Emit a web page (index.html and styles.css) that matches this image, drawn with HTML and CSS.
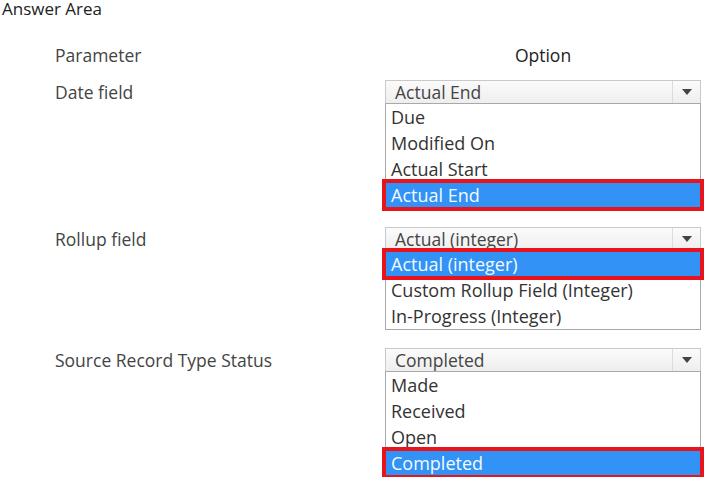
FILE: index.html
```html
<!DOCTYPE html>
<html>
<head>
<meta charset="utf-8">
<link rel="stylesheet" href="styles.css">
</head>
<body>
<div class="title">Answer Area</div>
<div class="grid">
  <div class="head label">Parameter</div>
  <div class="head option-head">Option</div>

  <div class="label">Date field</div>
  <div class="dd">
    <div class="select"><span class="val">Actual End</span><span class="btn"><span class="arrow"></span></span></div>
    <ul class="list">
      <li>Due</li>
      <li>Modified On</li>
      <li>Actual Start</li>
      <li class="sel">Actual End</li>
    </ul>
  </div>

  <div class="label">Rollup field</div>
  <div class="dd">
    <div class="select"><span class="val">Actual (integer)</span><span class="btn"><span class="arrow"></span></span></div>
    <ul class="list">
      <li class="sel">Actual (integer)</li>
      <li>Custom Rollup Field (Integer)</li>
      <li>In-Progress (Integer)</li>
    </ul>
  </div>

  <div class="label">Source Record Type Status</div>
  <div class="dd">
    <div class="select"><span class="val">Completed</span><span class="btn"><span class="arrow"></span></span></div>
    <ul class="list">
      <li>Made</li>
      <li>Received</li>
      <li>Open</li>
      <li class="sel">Completed</li>
    </ul>
  </div>
</div>
</body>
</html>
```
FILE: styles.css
```css
html, body {
  margin: 0;
  padding: 0;
  background: #ffffff;
}
body {
  font-family: "Open Sans", "Noto Sans", sans-serif;
  font-size: 17.5px;
  color: #3a3a3a;
  width: 705px;
  height: 477px;
  overflow: hidden;
}
.title {
  line-height: 18px;
  font-size: 17px;
  padding-left: 2px;
  color: #222;
}
.grid {
  display: grid;
  grid-template-columns: 330px 316px;
  row-gap: 18px;
  padding-left: 55px;
  margin-top: 25px;
}
.head {
  line-height: 24px;
  color: #222;
  margin-bottom: -5px;
}
.option-head {
  text-align: center;
}
.label {
  line-height: 24px;
  color: #444;
}
.dd {
  display: flex;
  flex-direction: column;
}
.select {
  height: 22px;
  display: flex;
  align-items: stretch;
  border: 1px solid #c9c9c9;
  border-bottom: none;
  background: linear-gradient(#fbfbfb, #eeeeee);
}
.val {
  flex: 1;
  padding-left: 9px;
  line-height: 22px;
  color: #444;
  white-space: nowrap;
}
.btn {
  width: 27px;
  border-left: 1px solid #dcdcdc;
  display: flex;
  align-items: center;
  justify-content: center;
}
.arrow {
  width: 0;
  height: 0;
  border-left: 5px solid transparent;
  border-right: 5px solid transparent;
  border-top: 6px solid #444;
}
.list {
  list-style: none;
  margin: 0;
  padding: 0;
  border: 1px solid #a9a9a9;
  background: #fff;
  font-size: 18px;
}
.list li {
  height: 26px;
  line-height: 26px;
  padding-left: 5px;
  color: #333;
  position: relative;
  white-space: nowrap;
}
.list li.sel {
  background: #3392f5;
  color: #f2fbff;
}
.list li.sel::after {
  content: "";
  position: absolute;
  left: -4px;
  right: -4px;
  top: -3px;
  bottom: -3px;
  border: 4px solid #e8141b;
}
```
